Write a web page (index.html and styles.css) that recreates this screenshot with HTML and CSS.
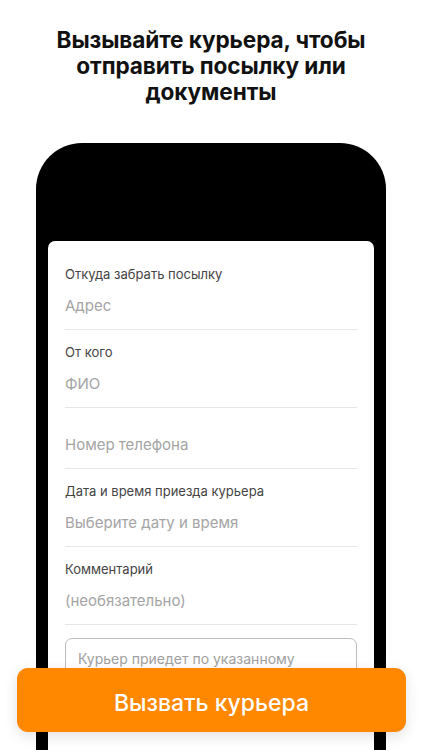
FILE: index.html
```html
<!DOCTYPE html>
<html lang="ru">
<head>
<meta charset="utf-8">
<title>Вызов курьера</title>
<link rel="stylesheet" href="styles.css">
</head>
<body>
<div class="page">
  <h1 class="title">Вызывайте курьера, чтобы<br>отправить посылку или<br>документы</h1>
  <div class="phone">
    <div class="screen">
      <div class="field">
        <div class="label">Откуда забрать посылку</div>
        <div class="placeholder">Адрес</div>
      </div>
      <div class="field">
        <div class="label">От кого</div>
        <div class="placeholder">ФИО</div>
      </div>
      <div class="field field-nolabel">
        <div class="placeholder">Номер телефона</div>
      </div>
      <div class="field">
        <div class="label">Дата и время приезда курьера</div>
        <div class="placeholder">Выберите дату и время</div>
      </div>
      <div class="field">
        <div class="label">Комментарий</div>
        <div class="placeholder">(необязательно)</div>
      </div>
      <div class="note">Курьер приедет по указанному адресу в выбранный интервал времени</div>
    </div>
  </div>
  <button class="cta">Вызвать курьера</button>
</div>
</body>
</html>
```
FILE: styles.css
```css
html, body {
  margin: 0;
  padding: 0;
  background: #fff;
}
body {
  height: 750px;
  overflow: hidden;
  font-family: Inter, "Noto Sans", "Liberation Sans", sans-serif;
}
.page {
  position: relative;
  height: 750px;
  overflow: hidden;
}
.title {
  margin: 0;
  padding-top: 27px;
  font-size: 22.6px;
  line-height: 26px;
  font-weight: 700;
  text-align: center;
  color: #111;
  letter-spacing: -0.1px;
}
.phone {
  margin: 38px 0 0 36px;
  width: 350px;
  height: 700px;
  box-sizing: border-box;
  background: #000;
  border-radius: 46px 46px 0 0;
  padding: 98px 12px 0 12px;
}
.screen {
  background: #fff;
  border-radius: 7px 7px 0 0;
  height: 100%;
  box-sizing: border-box;
  padding: 11px 17px 0 17px;
}
.field {
  padding: 14px 0 13px;
  border-bottom: 1px solid #e6e6e6;
}
.field-nolabel {
  padding-top: 27px;
}
.label {
  font-size: 13px;
  line-height: 16px;
  color: #444;
  margin-bottom: 14px;
}
.placeholder {
  font-size: 15px;
  line-height: 20px;
  color: #a4a4a4;
}
.note {
  margin-top: 13px;
  border: 1px solid #bdbdbd;
  border-radius: 7px;
  padding: 10px 60px 10px 12px;
  font-size: 14px;
  line-height: 19px;
  color: #a0a0a0;
}
.cta {
  position: absolute;
  z-index: 2;
  left: 17px;
  top: 668px;
  width: 389px;
  height: 64px;
  border: none;
  border-radius: 11px;
  background: #ff8800;
  color: #fff;
  font-family: Inter, "Noto Sans", "Liberation Sans", sans-serif;
  font-size: 23px;
  font-weight: 500;
  box-shadow: 0 4px 14px rgba(0,0,0,0.12);
  padding: 5px 0 0;
}
```
